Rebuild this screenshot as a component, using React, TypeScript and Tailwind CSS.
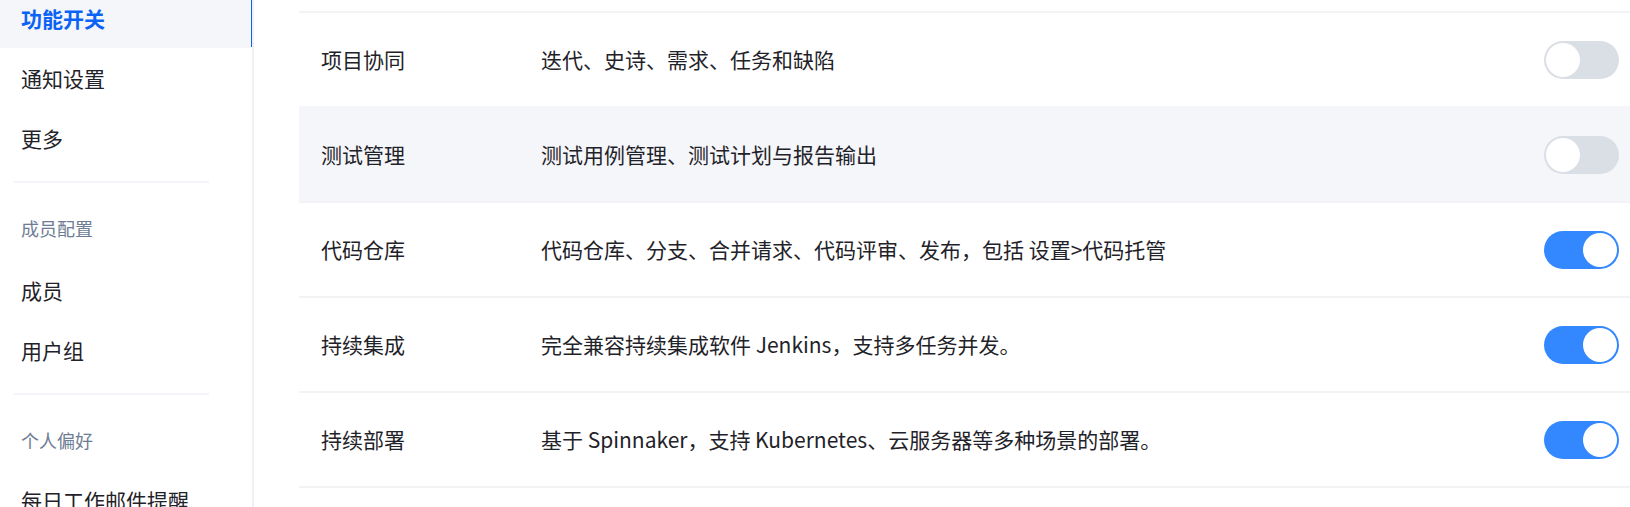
import React from "react";

const FONT = '"Noto Sans CJK SC", "Noto Sans", sans-serif';

function Toggle({ on }: { on: boolean }) {
  return (
    <div
      className={`w-[75px] h-[38px] shrink-0 rounded-full p-[2px] flex items-center ${
        on ? "bg-[#3388ff] justify-end" : "bg-[#dadee5] justify-start"
      }`}
    >
      <div className="w-[34px] h-[34px] rounded-full bg-white" />
    </div>
  );
}

const rows = [
  { name: "项目协同", desc: "迭代、史诗、需求、任务和缺陷", on: false, hover: false },
  { name: "测试管理", desc: "测试用例管理、测试计划与报告输出", on: false, hover: true },
  { name: "代码仓库", desc: "代码仓库、分支、合并请求、代码评审、发布，包括 设置>代码托管", on: true, hover: false },
  { name: "持续集成", desc: "完全兼容持续集成软件 Jenkins，支持多任务并发。", on: true, hover: false },
  { name: "持续部署", desc: "基于 Spinnaker，支持 Kubernetes、云服务器等多种场景的部署。", on: true, hover: false },
];

function NavItem({ label, active }: { label: string; active?: boolean }) {
  return (
    <div
      className={`relative h-[60px] shrink-0 flex items-center pl-[21px] text-[21px] leading-none ${
        active ? "bg-[#f5f6fa] text-[#0b63f6] font-bold" : "text-[#1f2329]"
      }`}
    >
      {label}
      {active && <span className="absolute right-[-2px] top-0 bottom-[1px] w-[3px] bg-[#0b63f6]" />}
    </div>
  );
}

function Header({ label }: { label: string }) {
  return (
    <div className="h-[60px] shrink-0 flex items-center pl-[21px] pb-[4px] text-[18px] leading-none text-[#6e7d93]">
      {label}
    </div>
  );
}

function Divider() {
  return <div className="mx-[14px] w-[195px] h-[2px] shrink-0 bg-[#f3f4f8] mt-[13px] mb-[17px]" />;
}

export default function App() {
  return (
    <div
      className="w-[1630px] h-[507px] overflow-hidden bg-white flex"
      style={{ fontFamily: FONT }}
    >
      <aside className="w-[254px] shrink-0 border-r-2 border-[#eef0f3] flex flex-col overflow-hidden">
        <div className="mt-[-12px] flex flex-col shrink-0">
          <NavItem label="功能开关" active />
          <NavItem label="通知设置" />
          <NavItem label="更多" />
        </div>
        <Divider />
        <Header label="成员配置" />
        <NavItem label="成员" />
        <NavItem label="用户组" />
        <Divider />
        <Header label="个人偏好" />
        <div className="-mt-[2px] shrink-0">
          <NavItem label="每日工作邮件提醒" />
        </div>
      </aside>
      <main className="flex-1 pl-[45px] pt-[11px]">
        <div className="flex flex-col">
          {rows.map((r, i) => (
            <div
              key={r.name}
              className={`h-[95px] shrink-0 flex items-center pl-[22px] pr-[11px] border-t-2 ${
                r.hover ? "bg-[#f5f6fa] border-[#f5f6fa]" : "bg-white border-[#f2f3f5]"
              } ${i === rows.length - 1 ? "border-b-2 h-[97px]" : ""}`}
            >
              <div className="w-[220px] shrink-0 text-[21px] leading-none text-[#1f2329]">{r.name}</div>
              <div className="flex-1 text-[21px] leading-none text-[#1f2329]">{r.desc}</div>
              <Toggle on={r.on} />
            </div>
          ))}
        </div>
      </main>
    </div>
  );
}
